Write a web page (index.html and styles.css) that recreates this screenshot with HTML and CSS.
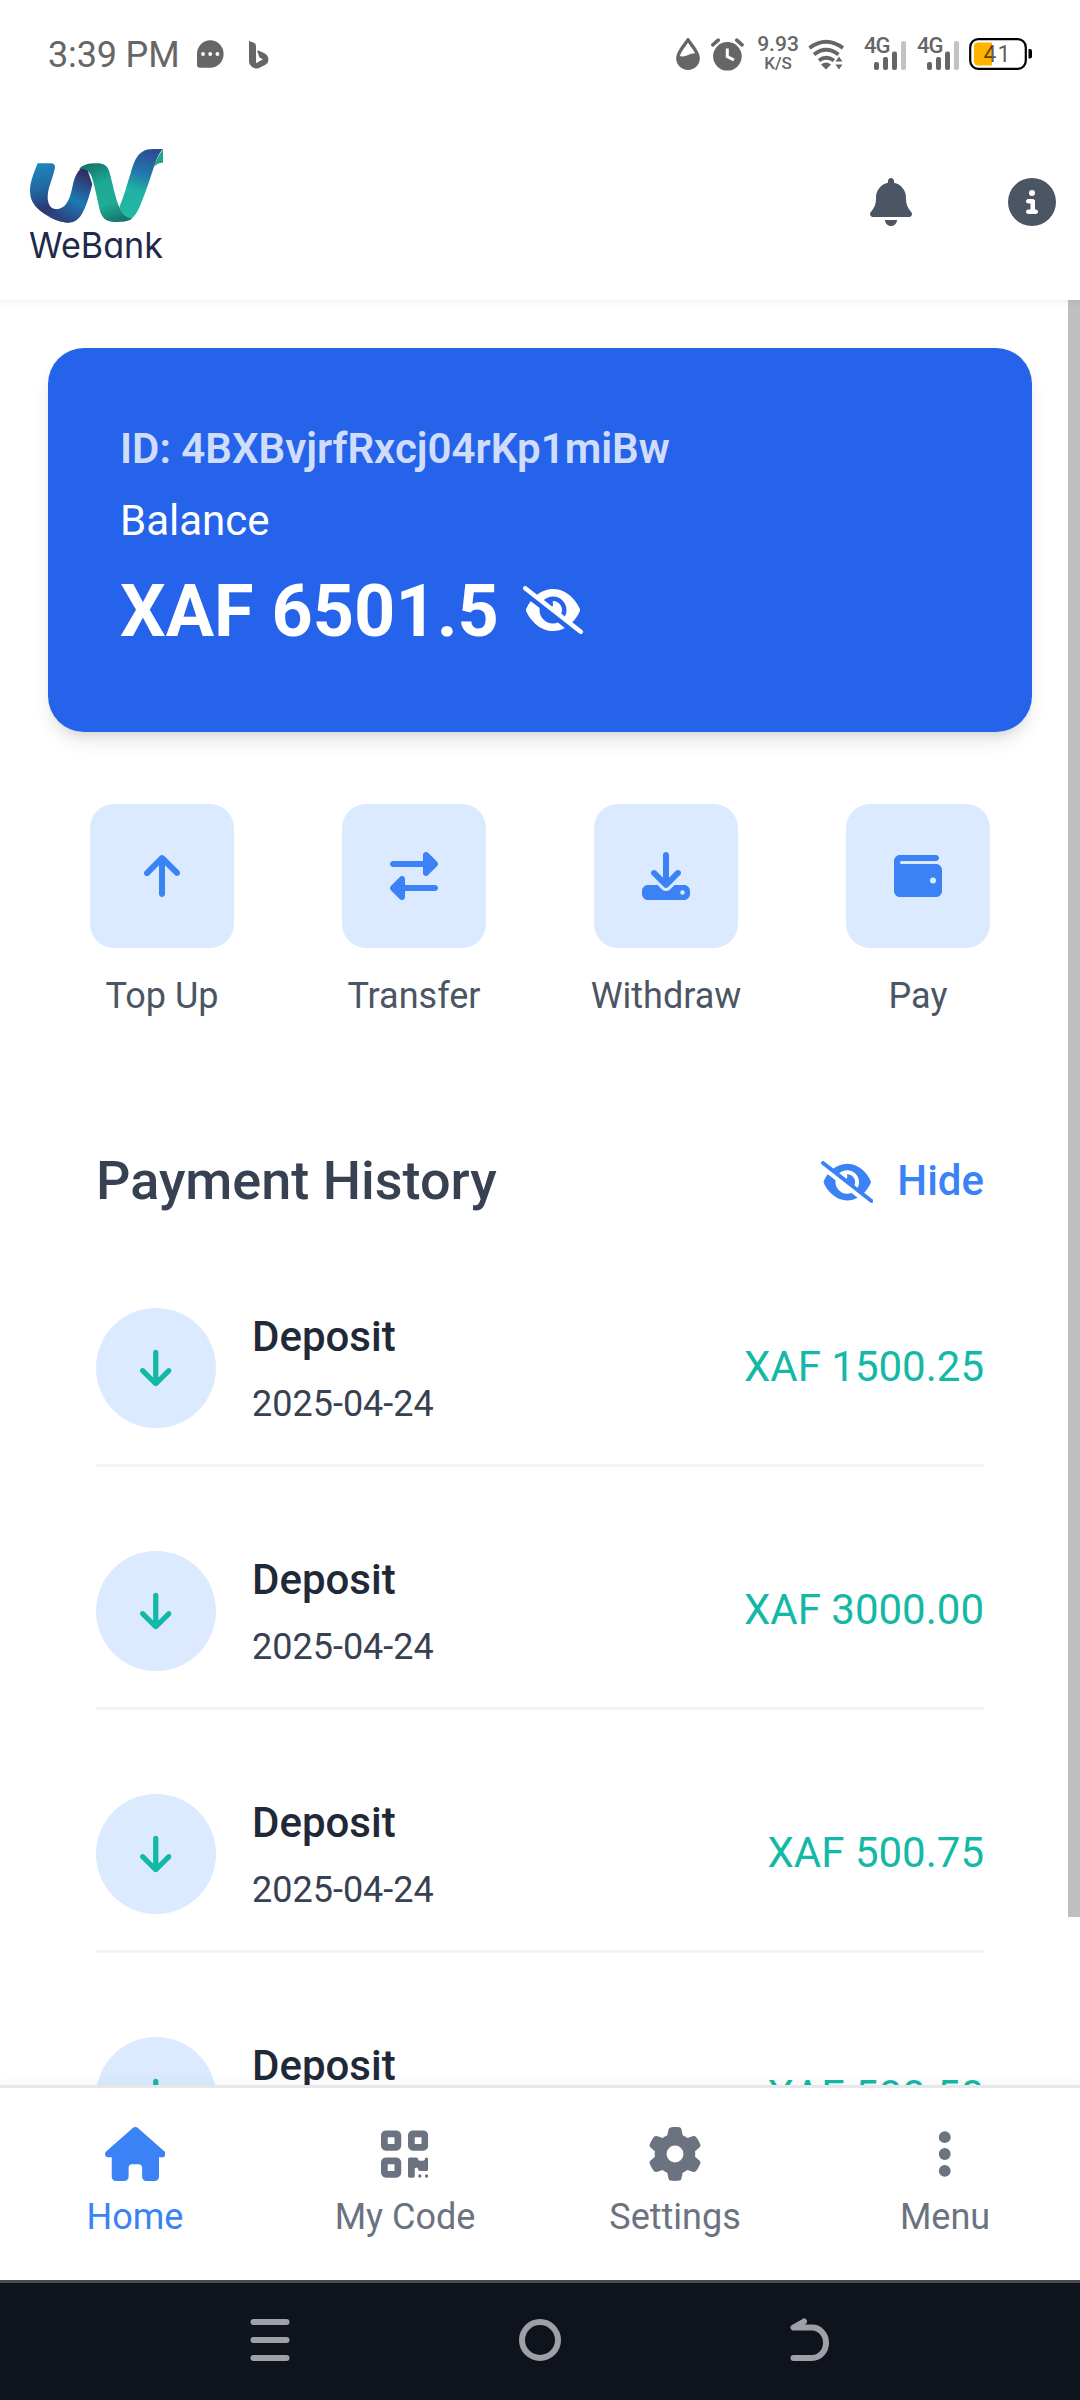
FILE: index.html
```html
<!DOCTYPE html>
<html lang="en">
<head>
<meta charset="utf-8">
<title>WeBank</title>
<link rel="stylesheet" href="styles.css">
</head>
<body>
<svg class="defs" width="0" height="0" aria-hidden="true">
  <symbol id="i-bell" viewBox="0 0 448 512"><path d="M224 0c-17.7 0-32 14.3-32 32V51.2C119 66 64 130.6 64 208v18.8c0 47-17.3 92.4-48.5 127.6l-7.4 8.3c-8.4 9.4-10.4 22.9-5.3 34.4S19.4 416 32 416H416c12.6 0 24-7.4 29.2-18.9s3.1-25-5.3-34.4l-7.4-8.3C401.3 319.2 384 273.9 384 226.8V208c0-77.4-55-142-128-156.8V32c0-17.7-14.3-32-32-32zm45.3 493.3c12-12 18.7-28.3 18.7-45.3H224 160c0 17 6.7 33.3 18.7 45.3s28.3 18.7 45.3 18.7s33.3-6.7 45.3-18.7z"/></symbol>
  <symbol id="i-info" viewBox="0 0 512 512"><path d="M256 512A256 256 0 1 0 256 0a256 256 0 1 0 0 512zM216 336h24V272H216c-13.3 0-24-10.7-24-24s10.7-24 24-24h48c13.3 0 24 10.7 24 24v88h8c13.3 0 24 10.7 24 24s-10.7 24-24 24H216c-13.3 0-24-10.7-24-24s10.7-24 24-24zm40-208a32 32 0 1 1 0 64 32 32 0 1 1 0-64z"/></symbol>
  <symbol id="i-eye-slash" viewBox="0 0 640 512"><path d="M38.8 5.1C28.4-3.1 13.3-1.2 5.1 9.2S-1.2 34.7 9.2 42.9l592 464c10.4 8.2 25.5 6.3 33.7-4.1s6.3-25.5-4.1-33.7L525.6 386.7c39.6-40.6 66.4-86.1 79.9-118.4c3.3-7.9 3.3-16.7 0-24.6c-14.9-35.7-46.2-87.7-93-131.1C465.5 68.8 400.8 32 320 32c-68.2 0-125 26.3-169.3 60.8L38.8 5.1zM223.1 149.5C248.6 126.2 282.7 112 320 112c79.5 0 144 64.5 144 144c0 24.9-6.3 48.3-17.4 68.7L408 294.5c8.4-19.3 10.6-41.4 4.8-63.3c-11.1-41.5-47.8-69.4-88.6-71.1c-5.8-.2-9.2 6.1-7.4 11.7c2.1 6.4 3.3 13.2 3.3 20.3c0 10.2-2.4 19.8-6.6 28.3l-90.3-70.8zM373 389.9c-16.4 6.5-34.3 10.1-53 10.1c-79.5 0-144-64.5-144-144c0-6.9 .5-13.6 1.4-20.2L83.1 161.5C60.3 191.2 44 220.8 34.5 243.7c-3.3 7.9-3.3 16.7 0 24.6c14.9 35.7 46.2 87.7 93 131.1C174.5 443.2 239.2 480 320 480c47.8 0 89.9-12.9 126.2-32.5L373 389.9z"/></symbol>
  <symbol id="i-up" viewBox="0 0 384 512"><path d="M214.6 41.4c-12.5-12.5-32.8-12.5-45.3 0l-160 160c-12.5 12.5-12.5 32.8 0 45.3s32.8 12.5 45.3 0L160 141.2V448c0 17.7 14.3 32 32 32s32-14.3 32-32V141.2L329.4 246.6c12.5 12.5 32.8 12.5 45.3 0s12.5-32.8 0-45.3l-160-160z"/></symbol>
  <symbol id="i-down" viewBox="0 0 384 512"><path d="M169.4 470.6c12.5 12.5 32.8 12.5 45.3 0l160-160c12.5-12.5 12.5-32.8 0-45.3s-32.8-12.5-45.3 0L224 370.8 224 64c0-17.7-14.3-32-32-32s-32 14.3-32 32l0 306.7L54.6 265.4c-12.5-12.5-32.8-12.5-45.3 0s-12.5 32.8 0 45.3l160 160z"/></symbol>
  <symbol id="i-transfer" viewBox="0 0 512 512"><path d="M32 96l320 0V32c0-12.9 7.8-24.6 19.8-29.6s25.7-2.2 34.9 6.9l96 96c6 6 9.4 14.1 9.4 22.6s-3.4 16.6-9.4 22.6l-96 96c-9.2 9.2-22.9 11.9-34.9 6.9s-19.8-16.6-19.8-29.6V160L32 160c-17.7 0-32-14.3-32-32s14.3-32 32-32zM480 352c17.7 0 32 14.3 32 32s-14.3 32-32 32H160v64c0 12.9-7.8 24.6-19.8 29.6s-25.7 2.2-34.9-6.9l-96-96c-6-6-9.4-14.1-9.4-22.6s3.4-16.6 9.4-22.6l96-96c9.2-9.2 22.9-11.9 34.9-6.9s19.8 16.6 19.8 29.6l0 64H480z"/></symbol>
  <symbol id="i-download" viewBox="0 0 512 512"><path d="M288 32c0-17.7-14.3-32-32-32s-32 14.3-32 32V274.7l-73.4-73.4c-12.5-12.5-32.8-12.5-45.3 0s-12.5 32.8 0 45.3l128 128c12.5 12.5 32.8 12.5 45.3 0l128-128c12.5-12.5 12.5-32.8 0-45.3s-32.8-12.5-45.3 0L288 274.7V32zM64 352c-35.3 0-64 28.7-64 64v32c0 35.3 28.7 64 64 64H448c35.3 0 64-28.7 64-64V416c0-35.3-28.7-64-64-64H346.5l-45.3 45.3c-25 25-65.5 25-90.5 0L165.5 352H64zm368 56a24 24 0 1 1 0 48 24 24 0 1 1 0-48z"/></symbol>
  <symbol id="i-wallet" viewBox="0 0 512 512"><path d="M64 32C28.7 32 0 60.7 0 96V416c0 35.3 28.7 64 64 64H448c35.3 0 64-28.7 64-64V192c0-35.3-28.7-64-64-64H80c-8.8 0-16-7.2-16-16s7.2-16 16-16H448c17.7 0 32-14.3 32-32s-14.3-32-32-32H64zM416 272a32 32 0 1 1 0 64 32 32 0 1 1 0-64z"/></symbol>
  <symbol id="i-home" viewBox="0 0 576 512"><path d="M575.8 255.5c0 18-15 32.1-32 32.1h-32l.7 160.2c0 2.7-.2 5.4-.5 8.1V472c0 22.1-17.9 40-40 40H456c-1.1 0-2.2 0-3.3-.1c-1.4 .1-2.8 .1-4.2 .1H416 392c-22.1 0-40-17.9-40-40V448 384c0-17.7-14.3-32-32-32H256c-17.7 0-32 14.3-32 32v64 24c0 22.1-17.9 40-40 40H160 128.1c-1.5 0-3-.1-4.5-.2c-1.2 .1-2.4 .2-3.6 .2H104c-22.1 0-40-17.9-40-40V360c0-.9 0-1.9 .1-2.8V287.6H32c-18 0-32-14-32-32.1c0-9 3-17 10-24L266.4 8c7-7 15-8 22-8s15 2 21 7L564.8 231.5c8 7 12 15 11 24z"/></symbol>
  <symbol id="i-qr" viewBox="0 0 448 512"><path d="M0 80C0 53.5 21.5 32 48 32h96c26.5 0 48 21.5 48 48v96c0 26.5-21.5 48-48 48H48c-26.5 0-48-21.5-48-48V80zM64 96v64h64V96H64zM0 336c0-26.5 21.5-48 48-48h96c26.5 0 48 21.5 48 48v96c0 26.5-21.5 48-48 48H48c-26.5 0-48-21.5-48-48V336zm64 16v64h64V352H64zM304 32h96c26.5 0 48 21.5 48 48v96c0 26.5-21.5 48-48 48H304c-26.5 0-48-21.5-48-48V80c0-26.5 21.5-48 48-48zm80 64H320v64h64V96zM256 304c0-8.8 7.2-16 16-16h64c8.8 0 16 7.2 16 16s7.2 16 16 16h32c8.8 0 16-7.2 16-16s7.2-16 16-16s16 7.2 16 16v96c0 8.8-7.2 16-16 16H368c-8.8 0-16-7.2-16-16s-7.2-16-16-16s-16 7.2-16 16v64c0 8.8-7.2 16-16 16H272c-8.8 0-16-7.2-16-16V304zM368 480a16 16 0 1 1 0-32 16 16 0 1 1 0 32zm64 0a16 16 0 1 1 0-32 16 16 0 1 1 0 32z"/></symbol>
  <symbol id="i-gear" viewBox="0 0 512 512"><path d="M495.9 166.6c3.2 8.7 .5 18.4-6.4 24.6l-43.3 39.4c1.1 8.3 1.7 16.8 1.7 25.4s-.6 17.1-1.7 25.4l43.3 39.4c6.9 6.2 9.6 15.9 6.4 24.6c-4.4 11.9-9.7 23.3-15.8 34.3l-4.7 8.1c-6.6 11-14 21.4-22.1 31.2c-5.9 7.2-15.7 9.6-24.5 6.8l-55.7-17.7c-13.4 10.3-28.2 18.9-44 25.4l-12.5 57.1c-2 9.1-9 16.3-18.2 17.8c-13.8 2.3-28 3.5-42.5 3.5s-28.7-1.2-42.5-3.5c-9.2-1.5-16.2-8.7-18.2-17.8l-12.5-57.1c-15.8-6.5-30.6-15.1-44-25.4L83.1 425.9c-8.8 2.8-18.6 .3-24.5-6.8c-8.1-9.8-15.5-20.2-22.1-31.2l-4.7-8.1c-6.1-11-11.4-22.4-15.8-34.3c-3.2-8.7-.5-18.4 6.4-24.6l43.3-39.4C64.6 273.1 64 264.6 64 256s.6-17.1 1.7-25.4L22.4 191.2c-6.9-6.2-9.6-15.9-6.4-24.6c4.4-11.9 9.7-23.3 15.8-34.3l4.7-8.1c6.6-11 14-21.4 22.1-31.2c5.9-7.2 15.7-9.6 24.5-6.8l55.7 17.7c13.4-10.3 28.2-18.9 44-25.4l12.5-57.1c2-9.1 9-16.3 18.2-17.8C227.3 1.2 241.5 0 256 0s28.7 1.2 42.5 3.5c9.2 1.5 16.2 8.7 18.2 17.8l12.5 57.1c15.8 6.5 30.6 15.1 44 25.4l55.7-17.7c8.8-2.8 18.6-.3 24.5 6.8c8.1 9.8 15.5 20.2 22.1 31.2l4.7 8.1c6.1 11 11.4 22.4 15.8 34.3zM256 336a80 80 0 1 0 0-160 80 80 0 1 0 0 160z"/></symbol>
  <symbol id="i-dots" viewBox="0 0 128 512"><circle cx="64" cy="96" r="56"/><circle cx="64" cy="256" r="56"/><circle cx="64" cy="416" r="56"/></symbol>
</svg>

<div class="phone">
  <div class="status">
    <div class="status-left">
      <span class="time">3:39 PM</span>
      <svg class="chat" width="27" height="28" viewBox="0 0 27 28"><path d="M0 14A13.3 13.8 0 1 1 13.3 27.8H3Q0 27.8 0 25z" fill="#666"/><circle cx="6" cy="14" r="1.9" fill="#fff"/><circle cx="13.2" cy="14" r="1.9" fill="#fff"/><circle cx="20.4" cy="14" r="1.9" fill="#fff"/></svg>
      <svg class="bing" width="20" height="28" viewBox="0 0 20 28"><path d="M0 0L5 1.8Q7 2.6 7 5V22.3L14 18.2 11.3 17Q10.6 16.700 10.300 16L8.300 10.500Q8 9.300 9.300 9.500L15 12Q19.400 14 19.400 18.500 19.400 22 16 24L10 27Q7 28.300 4 26.500 0 24.300 0 20z" fill="#666"/></svg>
    </div>
    <div class="status-right">
      <svg width="24" height="32" viewBox="0 0 24 32"><path d="M12 1.900C15 6.500 22.200 14 22.200 20A10.200 10.200 0 0 1 1.800 20C1.800 14 9 6.500 12 1.900z" fill="none" stroke="#666" stroke-width="3.400"/><path d="M2 17.500Q8 19.500 12 17T22 15.500V21A10 10 0 0 1 2 21z" fill="#666"/></svg>
      <svg class="alarm" width="33" height="33" viewBox="0 0 33 33"><circle cx="16.400" cy="18.300" r="14.300" fill="#666"/><path d="M1.800 6.800L7.200 2.200M25.800 2.200L31 6.800" stroke="#666" stroke-width="3.600" stroke-linecap="round"/><path d="M16.300 10.500V18.500L23 22" fill="none" stroke="#fff" stroke-width="3"/></svg>
      <div class="speed"><span>9.93</span><span class="unit">K/S</span></div>
      <svg class="wifi" width="37" height="32" viewBox="0 0 37 32"><g fill="none" stroke="#666" stroke-width="3.800"><path d="M1.500 9Q18 -3.500 35 9"/><path d="M6 15.500Q18 6 30.500 15.500"/><path d="M11 21.500Q18 16 26 21.500"/></g><path d="M13 25.500Q18 21.500 23 25.500L18 30.500zM31 17.500L34.500 22.500H27.500zM31 30.500L34.500 25.500H27.500z" fill="#666"/></svg>
      <div class="signal"><span>4G</span><svg width="33" height="30" viewBox="0 0 33 30"><g fill="#666"><rect x="0" y="21" width="5" height="8" rx="2"/><rect x="9" y="16" width="5" height="13" rx="2"/><rect x="18" y="10.500" width="5" height="18.500" rx="2"/></g><rect x="27" y="0" width="5" height="29" rx="2" fill="#c2c2c2"/></svg></div>
      <div class="signal second"><span>4G</span><svg width="33" height="30" viewBox="0 0 33 30"><g fill="#666"><rect x="0" y="21" width="5" height="8" rx="2"/><rect x="9" y="16" width="5" height="13" rx="2"/><rect x="18" y="10.500" width="5" height="18.500" rx="2"/></g><rect x="27" y="0" width="5" height="29" rx="2" fill="#c2c2c2"/></svg></div>
      <svg class="battery" width="63" height="32" viewBox="0 0 63 32"><rect x="1.200" y="1.200" width="55.600" height="29.600" rx="8" fill="#fff" stroke="#000" stroke-width="2.200"/><path d="M9 4.500H23V27.500H9Q5 27.500 5 23.500V8.500Q5 4.500 9 4.500z" fill="#ffb300"/><path d="M59.500 11H61Q63 11 63 13V18.500Q63 20.500 61 20.500H59.500z" fill="#000"/><text x="14.500" y="23.800" font-size="23" letter-spacing="1" fill="#000" fill-opacity=".65">41</text></svg>
    </div>
  </div>

  <header class="header">
    <svg class="logo" width="136" height="116" viewBox="90 447 408 348">
      <defs>
        <linearGradient id="g1" gradientUnits="userSpaceOnUse" x1="130" y1="490" x2="180" y2="665"><stop offset="0" stop-color="#1f86ba"/><stop offset=".4" stop-color="#2266a2"/><stop offset=".72" stop-color="#2a3a70"/><stop offset="1" stop-color="#2b4a8a"/></linearGradient>
        <linearGradient id="g2" gradientUnits="userSpaceOnUse" x1="262" y1="515" x2="190" y2="660"><stop offset="0" stop-color="#302a5c"/><stop offset=".3" stop-color="#28528f"/><stop offset=".58" stop-color="#1b7bb3"/><stop offset="1" stop-color="#2a427f"/></linearGradient>
        <linearGradient id="g3" gradientUnits="userSpaceOnUse" x1="275" y1="490" x2="345" y2="668"><stop offset="0" stop-color="#15776c"/><stop offset=".35" stop-color="#1fa894"/><stop offset=".68" stop-color="#1fac96"/><stop offset="1" stop-color="#17766c"/></linearGradient>
        <linearGradient id="g4" gradientUnits="userSpaceOnUse" x1="455" y1="450" x2="395" y2="655"><stop offset="0" stop-color="#2d4c94"/><stop offset=".35" stop-color="#2277ad"/><stop offset=".6" stop-color="#20b1a4"/><stop offset="1" stop-color="#22b8a0"/></linearGradient>
      </defs>
      <path fill="url(#g1)" d="M113 490H156Q168 492 164 508C157 540 143 562 143 595C145 618 155 628 170 628C188 628 198 618 205 605L235 640L205 668C175 668 145 650 130 640C102 619 90 600 90 572C90 545 103 515 113 490Z"/>
      <path fill="url(#g2)" d="M170 628C200 626 210 595 217 562C225 522 238 497 275 492L262 508L277 553C268 590 257 625 244 645C234 660 222 668 205 668C185 668 165 660 152 652Z"/>
      <path fill="url(#g4)" d="M358 622C372 590 380 555 392 520C403 480 415 447 458 447H489C475 460 470 480 462 500C450 535 440 570 425 605C412 638 402 657 378 662C365 655 360 635 358 622Z"/>
      <path fill="url(#g3)" d="M237 508C248 493 265 490 290 490C312 490 322 497 328 515C338 550 345 590 358 622C364 640 376 655 397 655C387 665 370 666 345 666C315 666 304 652 298 625C290 590 285 560 275 530C268 512 255 503 237 508Z"/>
      <path fill="#20a68c" d="M489 449V488C478 488 470 492 462 500C470 480 475 465 489 449Z"/>
      <text class="wordmark" x="87" y="775" textLength="402" lengthAdjust="spacingAndGlyphs">WeBank</text>
    </svg>
    <div class="header-actions">
      <svg width="42" height="48"><use href="#i-bell"/></svg>
      <svg width="48" height="48"><use href="#i-info"/></svg>
    </div>
  </header>

  <main class="main">
    <section class="card">
      <div class="card-id">ID: 4BXBvjrfRxcj04rKp1miBw</div>
      <div class="card-label">Balance</div>
      <div class="card-amount"><span>XAF 6501.5</span><svg width="60" height="48"><use href="#i-eye-slash"/></svg></div>
    </section>

    <section class="actions">
      <div class="action"><div class="tile"><svg width="36" height="48"><use href="#i-up"/></svg></div><span>Top Up</span></div>
      <div class="action"><div class="tile"><svg width="48" height="48"><use href="#i-transfer"/></svg></div><span>Transfer</span></div>
      <div class="action"><div class="tile"><svg width="48" height="48"><use href="#i-download"/></svg></div><span>Withdraw</span></div>
      <div class="action"><div class="tile"><svg width="48" height="48"><use href="#i-wallet"/></svg></div><span>Pay</span></div>
    </section>

    <section class="history">
      <div class="history-head">
        <h2>Payment History</h2>
        <div class="hide"><svg width="52.5" height="42"><use href="#i-eye-slash"/></svg><span>Hide</span></div>
      </div>
      <div class="row"><div class="dot"><svg width="31.5" height="42"><use href="#i-down"/></svg></div><div class="info"><div class="kind">Deposit</div><div class="date">2025-04-24</div></div><div class="amount">XAF 1500.25</div></div>
      <div class="row"><div class="dot"><svg width="31.5" height="42"><use href="#i-down"/></svg></div><div class="info"><div class="kind">Deposit</div><div class="date">2025-04-24</div></div><div class="amount">XAF 3000.00</div></div>
      <div class="row"><div class="dot"><svg width="31.5" height="42"><use href="#i-down"/></svg></div><div class="info"><div class="kind">Deposit</div><div class="date">2025-04-24</div></div><div class="amount">XAF 500.75</div></div>
      <div class="row"><div class="dot"><svg width="31.5" height="42"><use href="#i-down"/></svg></div><div class="info"><div class="kind">Deposit</div><div class="date">2025-04-24</div></div><div class="amount">XAF 500.50</div></div>
    </section>
    <div class="scrollbar"></div>
  </main>

  <nav class="tabs">
    <div class="tab active"><svg width="60.75" height="54"><use href="#i-home"/></svg><span>Home</span></div>
    <div class="tab"><svg width="47.25" height="54"><use href="#i-qr"/></svg><span>My Code</span></div>
    <div class="tab"><svg width="54" height="54"><use href="#i-gear"/></svg><span>Settings</span></div>
    <div class="tab"><svg width="13.5" height="54"><use href="#i-dots"/></svg><span>Menu</span></div>
  </nav>

  <div class="system">
    <svg width="40" height="44" viewBox="0 0 40 44"><path d="M3.500 4H36.500M3.500 22H36.500M3.500 40H36.500"/></svg>
    <svg width="44" height="44" viewBox="0 0 44 44"><circle cx="22" cy="22" r="18"/></svg>
    <svg width="40" height="44" viewBox="0 0 40 44"><path d="M14 3.500L3.500 9.500H22A14 15.200 0 0 1 22 40H3.500"/></svg>
  </div>
</div>
</body>
</html>
```
FILE: styles.css
```css
* { box-sizing: border-box; margin: 0; padding: 0; }
body { width: 1080px; height: 2400px; overflow: hidden; background: #fff; font-family: Roboto, "Liberation Sans", sans-serif; }
svg { display: block; flex: none; fill: currentColor; }
.defs { position: absolute; }
.phone { display: flex; flex-direction: column; width: 1080px; height: 2400px; }

.status { display: flex; justify-content: space-between; height: 104px; padding: 0 48px; color: #666; }
.status-left { display: flex; align-items: flex-start; padding-top: 40px; }
.time { width: 149px; margin-top: -6px; font-size: 36px; line-height: 42px; letter-spacing: -.15px; white-space: nowrap; }
.bing { margin: 1px 0 0 25px; }
.status-right { display: flex; align-items: flex-start; padding-top: 38px; }
.alarm { margin-left: 11px; }
.speed { display: flex; flex-direction: column; align-items: center; width: 42px; margin: -4px 0 0 13px; font-size: 21px; font-weight: 500; line-height: 20px; }
.speed .unit { font-size: 17px; line-height: 18px; }
.wifi { margin: 1px 0 0 9px; }
.signal { position: relative; width: 43px; height: 32px; margin-left: 19px; padding: 3px 0 0 10px; }
.signal span { position: absolute; left: 0; top: -4px; font-size: 22px; font-weight: 500; line-height: 24px; letter-spacing: -1px; }
.signal.second { margin-left: 10px; }
.battery { margin-left: 9px; }

.header { position: relative; z-index: 1; display: flex; align-items: center; justify-content: space-between; height: 196px; padding: 0 24px 0 30px; background: #fff; color: #4b5563; box-shadow: 0 3px 6px rgba(0, 0, 0, .05); }
.logo { margin-top: 10px; overflow: visible; }
.wordmark { font-family: Inter, sans-serif; font-size: 106px; font-weight: 400; font-feature-settings: "cv11"; fill: #1f2a4a; }
.header-actions { display: flex; gap: 96px; }

.main { position: relative; flex: none; height: 1785px; padding: 48px 48px 0; overflow: hidden; }
.card { height: 384px; padding: 72px; border-radius: 36px; background: #2563eb; color: #fff; box-shadow: 0 12px 18px -3px rgba(0, 0, 0, .1), 0 6px 12px -6px rgba(0, 0, 0, .1); }
.card-id { font-size: 42px; font-weight: 600; line-height: 58px; color: rgba(255, 255, 255, .8); }
.card-label { margin-top: 14px; font-size: 42px; line-height: 58px; }
.card-amount { display: flex; align-items: center; gap: 24px; margin-top: 14px; font-size: 72px; font-weight: 700; line-height: 96px; }
.card-amount svg { margin-bottom: 4px; }

.actions { display: grid; grid-template-columns: repeat(4, 252px); justify-content: center; margin-top: 72px; }
.action { display: flex; flex-direction: column; align-items: center; gap: 24px; font-size: 36px; line-height: 48px; color: #4b5563; }
.tile { display: flex; align-items: center; justify-content: center; width: 144px; height: 144px; border-radius: 24px; background: #dbeafe; color: #3b82f6; }

.history { padding: 0 48px; margin-top: 120px; }
.history-head { display: flex; align-items: flex-start; justify-content: space-between; height: 84px; margin-bottom: 48px; }
h2 { font-size: 54px; font-weight: 500; line-height: 82px; color: #374151; }
.hide { display: flex; align-items: center; gap: 24px; font-size: 42px; font-weight: 500; line-height: 82px; color: #3b82f6; }
.hide svg { margin-top: 2px; }
.row { display: flex; align-items: center; height: 195px; margin-bottom: 48px; border-bottom: 3px solid #f3f4f6; }
.dot { display: flex; align-items: center; justify-content: center; width: 120px; height: 120px; border-radius: 50%; background: #dbeafe; color: #14b8a6; }
.info { flex: 1; margin-left: 36px; }
.kind { font-size: 42px; font-weight: 500; line-height: 58px; color: #1f2937; }
.date { margin-top: 14px; font-size: 36px; line-height: 48px; color: #374151; }
.amount { padding-bottom: 2px; font-size: 42px; line-height: 60px; color: #14b8a6; }
.scrollbar { position: absolute; top: 0; right: 0; width: 12px; height: 1617px; background: #bfbfbf; }

.tabs { position: relative; z-index: 1; display: grid; grid-template-columns: repeat(4, 1fr); height: 195px; padding-top: 39px; border-top: 3px solid #e5e7eb; background: #fff; box-shadow: 0 -3px 15px rgba(0, 0, 0, .04); }
.tab { display: flex; flex-direction: column; align-items: center; gap: 12px; font-size: 36px; line-height: 48px; color: #6b7280; }
.tab.active { color: #3b82f6; }

.system { position: relative; z-index: 2; display: grid; grid-template-columns: 40px 44px 40px; column-gap: 228px; justify-content: center; align-items: center; height: 120px; padding-bottom: 3px; border-top: 3px solid #484c51; background: #0f131b; }
.system svg { fill: none; stroke: #9da0a6; stroke-width: 6; stroke-linecap: round; stroke-linejoin: round; }
```
